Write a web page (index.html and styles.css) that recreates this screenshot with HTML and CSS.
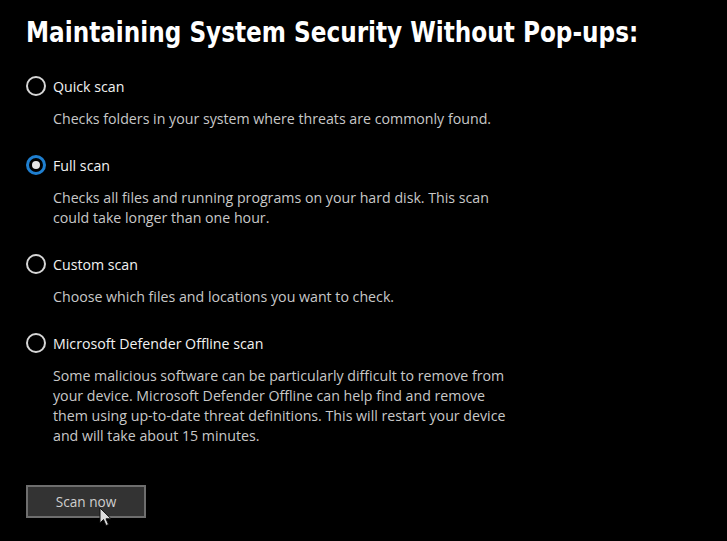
FILE: index.html
```html
<!DOCTYPE html>
<html lang="en">

<head>
    <meta charset="UTF-8">
    <title>Scan options</title>
    <link rel="stylesheet" href="styles.css">
</head>

<body>
    <h1 class="title">Maintaining System Security Without Pop-ups:</h1>

    <div class="options">
        <div class="option">
            <div class="option-head">
                <span class="radio"></span>
                <span class="label">Quick scan</span>
            </div>
            <p class="desc">Checks folders in your system where threats are commonly found.</p>
        </div>
        <div class="option">
            <div class="option-head">
                <span class="radio checked"></span>
                <span class="label">Full scan</span>
            </div>
            <p class="desc">Checks all files and running programs on your hard disk. This scan<br>could take longer than one hour.</p>
        </div>
        <div class="option">
            <div class="option-head">
                <span class="radio"></span>
                <span class="label">Custom scan</span>
            </div>
            <p class="desc">Choose which files and locations you want to check.</p>
        </div>
        <div class="option">
            <div class="option-head">
                <span class="radio"></span>
                <span class="label">Microsoft Defender Offline scan</span>
            </div>
            <p class="desc">Some malicious software can be particularly difficult to remove from<br>your device. Microsoft Defender Offline can help find and remove<br>them using up-to-date threat definitions. This will restart your device<br>and will take about 15 minutes.</p>
        </div>
    </div>

    <div class="actions">
        <button class="scan-btn">Scan now</button>
        <svg class="cursor" width="14" height="21" viewBox="0 0 14 21">
            <path d="M1 1 L1 16 L4.5 12.5 L7 18.5 L9.5 17.5 L7 11.8 L12 11.8 Z" fill="#ddd" stroke="#111" stroke-width="1"/>
        </svg>
    </div>
</body>

</html>
```

FILE: styles.css
```css
html,
body {
    margin: 0;
}

body {
    background: #000;
    color: #fff;
    font-family: "Open Sans", "Noto Sans", sans-serif;
    width: 727px;
    height: 541px;
    overflow: hidden;
    padding: 0 0 0 26px;
    box-sizing: border-box;
}

/* condensed face is still a bit wide, so squeeze it a little */
.title {
    margin: 0;
    padding-top: 16px;
    font-family: "DejaVu Sans", sans-serif;
    font-stretch: condensed;
    font-weight: bold;
    font-size: 28px;
    line-height: 34px;
    white-space: nowrap;
    color: #fff;
    transform: scaleX(0.92);
    transform-origin: left center;
}

.options {
    margin-top: 25px;
    display: flex;
    flex-direction: column;
    gap: 25px;
}

.option-head {
    display: flex;
    align-items: center;
    gap: 7px;
    height: 22px;
}

.radio {
    width: 20px;
    height: 20px;
    box-sizing: border-box;
    border: 2px solid #d6d6d6;
    border-radius: 50%;
    display: flex;
    align-items: center;
    justify-content: center;
}

.radio.checked {
    border: 3px solid #1f7fd0;
}

.radio.checked::after {
    content: "";
    width: 8px;
    height: 8px;
    border-radius: 50%;
    background: #e6e6e6;
}

.label {
    font-size: 14.2px;
    color: #f2f2f2;
}

.desc {
    margin: 12px 0 0 27px;
    font-size: 14.2px;
    line-height: 20px;
    color: #c8c8c8;
}

.actions {
    margin-top: 39px;
    position: relative;
}

.scan-btn {
    width: 120px;
    height: 33px;
    background: #333;
    border: 2px solid #6e6e6e;
    color: #cfcfcf;
    font-family: "Open Sans", "Noto Sans", sans-serif;
    font-size: 13.6px;
    padding: 0;
}

.cursor {
    position: absolute;
    left: 73px;
    top: 22px;
}
```
